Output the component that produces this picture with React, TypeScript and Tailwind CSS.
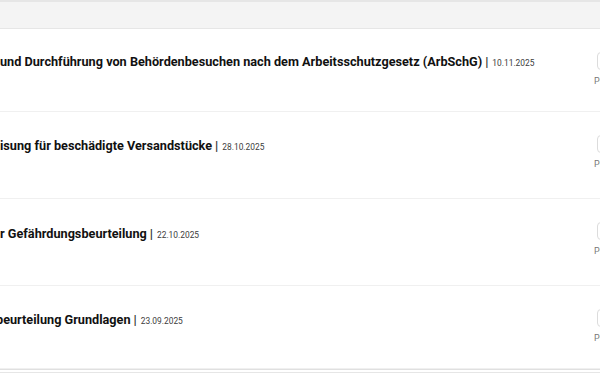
import React from "react";

const rows = [
  { title: "und Durchführung von Behördenbesuchen nach dem Arbeitsschutzgesetz (ArbSchG)", date: "10.11.2025", shift: "ml-0", h: "h-[83px]", pt: "pt-[23px]" },
  { title: "isung für beschädigte Versandstücke", date: "28.10.2025", shift: "ml-0", h: "h-[87px]", pt: "pt-[24px]" },
  { title: "r Gefährdungsbeurteilung", date: "22.10.2025", shift: "ml-0", h: "h-[87px]", pt: "pt-[25px]" },
  { title: "beurteilung Grundlagen", date: "23.09.2025", shift: "ml-[-4px]", h: "h-[83px]", pt: "pt-[24px]" },
];

export default function App() {
  return (
    <div className="w-[600px] h-[373px] overflow-hidden bg-white" style={{ fontFamily: "Roboto, 'Liberation Sans', sans-serif" }}>
      <div className="w-[640px]">
        <div className="h-[29px] bg-[#f4f4f4] border-t-2 border-b border-[#e6e6e6]" />
        {rows.map((r, i) => (
          <div key={i} className={`flex ${r.h} border-b border-[#f0f0f0]`}>
            <div className={`flex-1 ${r.pt} ${r.shift}`}>
              <div className="flex items-baseline whitespace-nowrap leading-5">
                <span className="text-[12.7px] font-bold text-[#111]">{r.title}</span>
                <span className="text-[12.7px] font-bold text-[#333] ml-[3px]">|</span>
                <span className="text-[8.4px] text-[#3c3c3c] ml-[4px]">{r.date}</span>
              </div>
            </div>
            <div className="w-[46px] shrink-0 pt-[23px] flex flex-col items-start">
              <div className="ml-[3px] w-[40px] h-[18px] rounded border border-[#dcdcdc] bg-white" />
              <div className="mt-[5px] text-[9px] text-[#777] leading-3">Platz</div>
            </div>
          </div>
        ))}
        <div className="h-[3px] border-t border-[#e0e0e0]" />
        <div className="border-t border-[#e6e6e6]" />
      </div>
    </div>
  );
}
